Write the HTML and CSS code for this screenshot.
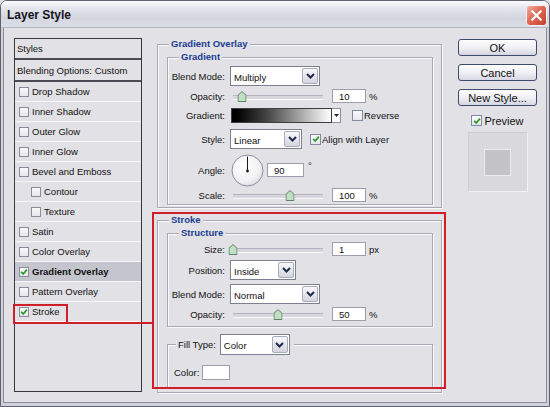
FILE: index.html
```html
<!DOCTYPE html>
<html lang="en">

<head>
	<meta charset="UTF-8">
	<title>Layer Style</title>
	<link rel="stylesheet" href="styles.css">
</head>

<body>
	<div class="window">
		<div class="titlebar">
			<span class="title">Layer Style</span>
			<span class="close-btn">
				<svg width="21" height="21" viewBox="0 0 21 21">
					<defs>
						<linearGradient id="closeFill" x1="0" y1="0" x2="1" y2="1">
							<stop offset="0" stop-color="#f3b2a4" />
							<stop offset="0.45" stop-color="#df6a55" />
							<stop offset="1" stop-color="#c23d2a" />
						</linearGradient>
					</defs>
					<rect x="0.5" y="0.5" width="20" height="20" rx="3" fill="url(#closeFill)" stroke="#f4f4f8" />
					<path d="M6.2 6.2 L14.8 14.8 M14.8 6.2 L6.2 14.8" stroke="#fff" stroke-width="2.2" stroke-linecap="round" />
				</svg>
			</span>
		</div>

		<div class="dialog">
			<ul class="styles">
				<li class="head first">Styles</li>
				<li class="head">Blending Options: Custom</li>
				<li><span class="check"></span>Drop Shadow</li>
				<li><span class="check"></span>Inner Shadow</li>
				<li><span class="check"></span>Outer Glow</li>
				<li><span class="check"></span>Inner Glow</li>
				<li><span class="check"></span>Bevel and Emboss</li>
				<li class="sub"><span class="check"></span>Contour</li>
				<li class="sub"><span class="check"></span>Texture</li>
				<li><span class="check"></span>Satin</li>
				<li><span class="check"></span>Color Overlay</li>
				<li class="active"><span class="check"><svg class="tick" viewBox="0 0 8 8"><path d="M1.2 3.9 L3.2 6 L6.9 1.6" /></svg></span>Gradient Overlay</li>
				<li><span class="check"></span>Pattern Overlay</li>
				<li><span class="check"><svg class="tick" viewBox="0 0 8 8"><path d="M1.2 3.9 L3.2 6 L6.9 1.6" /></svg></span>Stroke</li>
			</ul>

			<div class="panel">
				<fieldset class="group outer">
					<legend>Gradient Overlay</legend>
					<fieldset class="group inner">
						<legend>Gradient</legend>
						<div class="row tall mt3">
							<span class="lbl">Blend Mode:</span>
							<div class="combo combo-wide">
								<span class="combo-value">Multiply</span>
								<span class="combo-btn"><svg width="9" height="6" viewBox="0 0 9 6"><path d="M1 1 L4.5 4.5 L8 1" /></svg></span>
							</div>
						</div>
						<div class="row">
							<span class="lbl">Opacity:</span>
							<div class="slider"><span class="thumb" style="left: 10%"><svg width="9" height="11" viewBox="0 0 9 11"><path d="M0.5 10.5 V4.2 L4.5 0.6 L8.5 4.2 V10.5 Z" /></svg></span></div>
							<input class="num" type="text" value="10">
							<span class="unit">%</span>
						</div>
						<div class="row mt3">
							<span class="lbl">Gradient:</span>
							<div class="gradient-pick">
								<span class="gradient-swatch"></span>
								<span class="gradient-arrow"><svg width="5" height="3" viewBox="0 0 5 3"><path d="M0 0 H5 L2.5 3 Z" /></svg></span>
							</div>
							<span class="option reverse"><span class="check"></span>Reverse</span>
						</div>
						<div class="row tall mt6">
							<span class="lbl">Style:</span>
							<div class="combo combo-style">
								<span class="combo-value">Linear</span>
								<span class="combo-btn"><svg width="9" height="6" viewBox="0 0 9 6"><path d="M1 1 L4.5 4.5 L8 1" /></svg></span>
							</div>
							<span class="option align"><span class="check"><svg class="tick" viewBox="0 0 8 8"><path d="M1.2 3.9 L3.2 6 L6.9 1.6" /></svg></span>Align with Layer</span>
						</div>
						<div class="row dial-row mt4">
							<span class="lbl">Angle:</span>
							<svg class="dial" width="33" height="33" viewBox="0 0 33 33">
								<defs>
									<radialGradient id="dialFill" cx="0.4" cy="0.35" r="0.7">
										<stop offset="0" stop-color="#ffffff" />
										<stop offset="0.7" stop-color="#f2f2f5" />
										<stop offset="1" stop-color="#d9d9e0" />
									</radialGradient>
								</defs>
								<circle cx="16.5" cy="16.5" r="15.5" fill="url(#dialFill)" stroke="#8b8d9a" />
								<path d="M16.5 17 V2.5" stroke="#1a1a1a" stroke-width="1" />
								<circle cx="16.5" cy="17" r="1.4" fill="#1a1a1a" />
							</svg>
							<input class="num num-angle" type="text" value="90">
							<span class="degree">°</span>
						</div>
						<div class="row mt0">
							<span class="lbl">Scale:</span>
							<div class="slider"><span class="thumb" style="left: 63%"><svg width="9" height="11" viewBox="0 0 9 11"><path d="M0.5 10.5 V4.2 L4.5 0.6 L8.5 4.2 V10.5 Z" /></svg></span></div>
							<input class="num" type="text" value="100">
							<span class="unit">%</span>
						</div>
					</fieldset>
				</fieldset>

				<fieldset class="group outer stroke">
					<legend>Stroke</legend>
					<fieldset class="group inner structure">
						<legend>Structure</legend>
						<div class="row">
							<span class="lbl">Size:</span>
							<div class="slider"><span class="thumb" style="left: 0%"><svg width="9" height="11" viewBox="0 0 9 11"><path d="M0.5 10.5 V4.2 L4.5 0.6 L8.5 4.2 V10.5 Z" /></svg></span></div>
							<input class="num" type="text" value="1">
							<span class="unit">px</span>
						</div>
						<div class="row tall mt3">
							<span class="lbl">Position:</span>
							<div class="combo combo-pos">
								<span class="combo-value">Inside</span>
								<span class="combo-btn"><svg width="9" height="6" viewBox="0 0 9 6"><path d="M1 1 L4.5 4.5 L8 1" /></svg></span>
							</div>
						</div>
						<div class="row tall mt4">
							<span class="lbl">Blend Mode:</span>
							<div class="combo combo-wide">
								<span class="combo-value">Normal</span>
								<span class="combo-btn"><svg width="9" height="6" viewBox="0 0 9 6"><path d="M1 1 L4.5 4.5 L8 1" /></svg></span>
							</div>
						</div>
						<div class="row">
							<span class="lbl">Opacity:</span>
							<div class="slider"><span class="thumb" style="left: 50%"><svg width="9" height="11" viewBox="0 0 9 11"><path d="M0.5 10.5 V4.2 L4.5 0.6 L8.5 4.2 V10.5 Z" /></svg></span></div>
							<input class="num" type="text" value="50">
							<span class="unit">%</span>
						</div>
					</fieldset>
					<fieldset class="group inner fill">
						<legend class="fill-legend">
							<span>Fill Type:</span>
							<div class="combo combo-fill">
								<span class="combo-value">Color</span>
								<span class="combo-btn"><svg width="9" height="6" viewBox="0 0 9 6"><path d="M1 1 L4.5 4.5 L8 1" /></svg></span>
							</div>
						</legend>
						<div class="row color-row">
							<span>Color:</span>
							<span class="swatch"></span>
						</div>
					</fieldset>
				</fieldset>
			</div>

			<div class="actions">
				<button class="btn first">OK</button>
				<button class="btn">Cancel</button>
				<button class="btn">New Style...</button>
				<span class="option preview-toggle"><span class="check"><svg class="tick" viewBox="0 0 8 8"><path d="M1.2 3.9 L3.2 6 L6.9 1.6" /></svg></span>Preview</span>
				<div class="preview"><div class="preview-layer"></div></div>
			</div>

			<div class="mark mark-item"></div>
			<div class="mark mark-link"></div>
			<div class="mark mark-panel"></div>
		</div>
	</div>
</body>

</html>
```

FILE: styles.css
```css
* {
	box-sizing: border-box;
}

html,
body {
	margin: 0;
	width: 550px;
	height: 407px;
	overflow: hidden;
	font-family: 'Liberation Sans', Arial, sans-serif;
	font-size: 9.5px;
	color: #111;
	background: #e2e2e6;
}

.window {
	width: 550px;
	height: 407px;
	display: flex;
	flex-direction: column;
	border: 1px solid #60616f;
	border-radius: 7px 7px 0 0;
	background: #e2e2e6;
	overflow: hidden;
}

.titlebar {
	height: 27px;
	flex: none;
	display: flex;
	align-items: center;
	justify-content: space-between;
	padding: 2px 2px 0 6px;
	background: linear-gradient(#fcfcfe, #e6e7ee 25%, #d3d5e0 65%, #dcdee7);
	border-bottom: 1px solid #b3b5c3;
}

.title {
	font-size: 12px;
	font-weight: bold;
	color: #141420;
}

.close-btn {
	display: flex;
}

.dialog {
	flex: 1;
	position: relative;
	display: flex;
	align-items: flex-start;
	padding: 10px 0 0 11px;
	border-left: 2px solid #cfd0da;
	border-right: 2px solid #cfd0da;
	border-bottom: 3px solid #cfd0da;
	box-shadow: inset 1px 0 0 #8c8d99, inset -1px 0 0 #8c8d99, inset 0 -1px 0 #8c8d99;
}

/* styles list */

.styles {
	list-style: none;
	margin: 0;
	padding: 0;
	width: 128px;
	height: 354px;
	flex: none;
	border: 1px solid #38383e;
}

.styles li {
	height: 20px;
	display: flex;
	align-items: center;
	padding-left: 4px;
	border-bottom: 1px solid #f7f7f9;
	white-space: nowrap;
}

.styles li.head {
	height: 22px;
	padding-left: 2px;
	border-bottom: 2px solid #4b4b54;
}

.styles li.head.first {
	height: 21px;
}

.styles li.sub {
	padding-left: 16px;
}

.styles li.active {
	background: #c5c5cd;
	font-weight: bold;
}

.check {
	width: 10px;
	height: 10px;
	flex: none;
	display: flex;
	align-items: center;
	justify-content: center;
	margin-right: 3px;
	border: 1px solid #8a8c9a;
	background: linear-gradient(#fafafc, #e6e6ec);
}

.tick {
	width: 8px;
	height: 8px;
}

.tick path {
	fill: none;
	stroke: #279a2a;
	stroke-width: 1.7;
}

/* middle panel */

.panel {
	width: 285px;
	margin-left: 15px;
	flex: none;
}

fieldset.group {
	margin: 0;
	padding: 0;
	min-width: 0;
	border: 1px solid #a8a9b5;
	box-shadow: inset 1px 1px 0 #fafafc, 1px 1px 0 #fafafc;
}

fieldset.group > legend {
	margin-left: 11px;
	padding: 0 2px;
	line-height: 12px;
	font-weight: bold;
	color: #1b3c92;
	background: #e2e2e6;
}

fieldset.inner {
	margin: 1px 8px 2px 9px;
	padding-bottom: 1px;
}

fieldset.stroke {
	margin-top: 6px;
}

fieldset.structure {
	padding-bottom: 4px;
}

fieldset.fill {
	margin-top: 7px;
	margin-bottom: 4px;
	padding-bottom: 7px;
}

fieldset.group > legend.fill-legend {
	display: flex;
	align-items: center;
	gap: 4px;
	margin-left: 8px;
	padding: 0 4px 0 2px;
	font-weight: normal;
	color: #111;
}

.row {
	display: flex;
	align-items: center;
	height: 16px;
	margin-top: 2px;
}

.row.tall {
	height: 20px;
}

.row.dial-row {
	height: 34px;
}

.mt0 {
	margin-top: 0;
}

.mt3 {
	margin-top: 3px;
}

.mt4 {
	margin-top: 4px;
}

.mt6 {
	margin-top: 6px;
}

.lbl {
	width: 57px;
	flex: none;
	margin-right: 5px;
	text-align: right;
}

.combo {
	display: flex;
	height: 20px;
	padding: 1px;
	border: 1px solid #7d8090;
	background: #fff;
}

.combo-wide {
	width: 90px;
}

.combo-style {
	width: 72px;
}

.combo-pos {
	width: 66px;
}

.combo-fill {
	width: 70px;
	height: 21px;
}

.combo-value {
	flex: 1;
	display: flex;
	align-items: center;
	padding: 2px 0 0 2px;
}

.combo-btn {
	width: 16px;
	display: flex;
	align-items: center;
	justify-content: center;
	border: 1px solid #a9abbd;
	border-radius: 2px;
	background: linear-gradient(#f8f8fb, #d3d4df);
}

.combo-btn path {
	fill: none;
	stroke: #1f2b4a;
	stroke-width: 2;
}

.slider {
	position: relative;
	width: 90px;
	height: 16px;
	margin: 0 9px 0 3px;
}

.slider::before {
	content: '';
	position: absolute;
	left: 0;
	right: 0;
	top: 7px;
	height: 3px;
	border-top: 1px solid #b3b4bd;
	border-bottom: 1px solid #fbfbfc;
	background: #d6d6dc;
}

.thumb {
	position: absolute;
	top: 3px;
	display: flex;
	transform: translateX(-50%);
}

.thumb path {
	fill: #bfe0c2;
	stroke: #62806a;
}

.num {
	width: 34px;
	height: 14px;
	margin: 0;
	padding: 1px 0 0 6px;
	border: 1px solid #9c9eac;
	background: #fff;
	font: inherit;
	color: #111;
}

.unit {
	margin-left: 3px;
}

.gradient-pick {
	display: flex;
	height: 15px;
	margin-left: 1px;
}

.gradient-swatch {
	width: 101px;
	border: 1px solid #3d3d44;
	background: linear-gradient(to right, #000 5%, #444 35%, #b8b8b8 75%, #fff);
}

.gradient-arrow {
	width: 9px;
	display: flex;
	align-items: center;
	justify-content: center;
	border: 1px solid #8e909c;
	border-left: 0;
	background: #fff;
}

.gradient-arrow path {
	fill: #222;
}

.option {
	display: flex;
	align-items: center;
	white-space: nowrap;
}

.option .check {
	width: 11px;
	height: 11px;
	margin-right: 1px;
	border-color: #7e8aa6;
}

.reverse {
	margin-left: 11px;
}

.align {
	margin-left: 8px;
}

.dial {
	margin-left: 1px;
	flex: none;
}

.num-angle {
	width: 37px;
	margin-left: 3px;
}

.degree {
	align-self: flex-start;
	margin: 7px 0 0 4px;
}

.color-row {
	margin-top: 9px;
	padding-left: 6px;
	gap: 3px;
}

.swatch {
	width: 28px;
	height: 15px;
	border: 1px solid #9c9eac;
	background: #fff;
}

/* buttons and preview */

.actions {
	width: 79px;
	margin-left: 16px;
	flex: none;
	display: flex;
	flex-direction: column;
	align-items: center;
}

.btn {
	width: 79px;
	height: 17px;
	margin: 8px 0 0;
	padding: 0;
	border: 1px solid #3e4b6d;
	border-radius: 3px;
	background: linear-gradient(#ffffff, #eeeef4 55%, #d5d6e2);
	font-family: 'Liberation Sans', Arial, sans-serif;
	font-size: 11px;
	color: #111;
}

.btn.first {
	margin-top: 1px;
}

.preview-toggle {
	height: 13px;
	margin-top: 8px;
	font-size: 11px;
}

.preview-toggle .check {
	margin-right: 2px;
}

.preview {
	width: 60px;
	height: 60px;
	margin-top: 5px;
	display: flex;
	align-items: center;
	justify-content: center;
	border: 1px solid #f2f2f5;
	border-top-color: #cdcdd3;
	border-left-color: #cdcdd3;
	background: #d9d9de;
}

.preview-layer {
	width: 27px;
	height: 27px;
	border: 1px solid #ececf0;
	background: #c3c3c8;
}

/* red annotation marks */

.mark {
	position: absolute;
	border: 2px solid #cf1f2a;
}

.mark-panel {
	left: 149px;
	top: 184px;
	width: 294px;
	height: 177px;
}

.mark-item {
	left: 10px;
	top: 276px;
	width: 55px;
	height: 20px;
}

.mark-link {
	left: 64px;
	top: 294px;
	width: 87px;
	height: 2px;
	border: 0;
	background: #cf1f2a;
}
```
